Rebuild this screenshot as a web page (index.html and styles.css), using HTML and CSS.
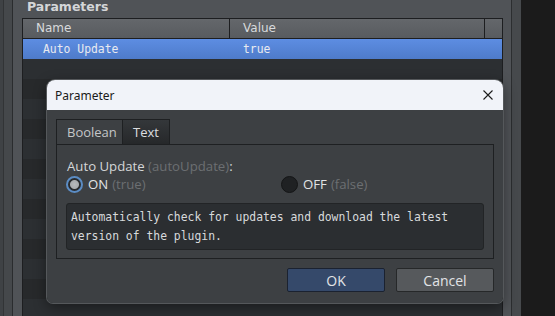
FILE: index.html
```html
<!DOCTYPE html>
<html lang="en">
<head>
    <meta charset="UTF-8">
    <meta name="viewport" content="width=device-width, initial-scale=1.0">
    <title>Parameters</title>
    <link rel="stylesheet" href="styles.css">
</head>
<body>
    <div class="app">
        <div class="side"></div>
        <div class="panel">
            <div class="panel-title">Parameters</div>
            <div class="table">
                <div class="row head">
                    <div class="cell name">Name</div>
                    <div class="cell value">Value</div>
                    <div class="cell stub"></div>
                </div>
                <div class="row selected">
                    <div class="cell name mono">Auto Update</div>
                    <div class="cell value mono">true</div>
                    <div class="cell"></div>
                </div>
                <div class="row"></div>
                <div class="row"></div>
                <div class="row"></div>
                <div class="row"></div>
                <div class="row"></div>
                <div class="row"></div>
                <div class="row"></div>
                <div class="row"></div>
                <div class="row"></div>
                <div class="row"></div>
                <div class="row"></div>
                <div class="row"></div>
                <div class="row"></div>
            </div>
        </div>
        <div class="gutter"></div>
        <div class="void"></div>
    </div>

    <!-- modal dialog over the list -->
    <div class="dialog">
        <div class="dialog-title">
            <span>Parameter</span>
            <svg class="close" width="10" height="10" viewBox="0 0 10 10">
                <path d="M0.5 0.5 L9.5 9.5 M9.5 0.5 L0.5 9.5" stroke="#1c1c1c" stroke-width="1.1" fill="none"/>
            </svg>
        </div>
        <div class="dialog-body">
            <div class="tabs">
                <div class="tab active">Boolean</div>
                <div class="tab">Text</div>
            </div>
            <div class="pane">
                <div class="field-label">Auto Update <span class="dim">(autoUpdate)</span>:</div>
                <div class="choices">
                    <label class="choice"><span class="radio on"></span>ON <span class="dim">(true)</span></label>
                    <label class="choice"><span class="radio"></span>OFF <span class="dim">(false)</span></label>
                </div>
                <div class="desc">Automatically check for updates and download the latest<br>version of the plugin.</div>
            </div>
            <div class="buttons">
                <button class="btn primary">OK</button>
                <button class="btn">Cancel</button>
            </div>
        </div>
    </div>
</body>
</html>
```

FILE: styles.css
```css
body {
    margin: 0;
    width: 555px;
    height: 316px;
    overflow: hidden;
    background-color: #1b1b1b;
    font-family: "DejaVu Sans", sans-serif;
    color: #d6d8da;
    position: relative;
}
.app {
    display: flex;
    height: 316px;
}
.side {
    width: 12px;
    background-color: #3f4245;
    border-right: 1px solid #2a2c2e;
    box-shadow: inset -8px 0 0 #45484b, inset -9px 0 0 #323436;
}
.panel {
    width: 481px;
    padding: 0 8px 0 9px;
    background-color: #505357;
    border-right: 1px solid #2c2e30;
}
.panel-title {
    height: 18px;
    line-height: 14px;
    padding-left: 5px;
    font-size: 12.5px;
    font-weight: bold;
    color: #d4d6d8;
}
.table {
    border: 1px solid #1d1e20;
    border-bottom: none;
    height: 297px;
    overflow: hidden;
    background-color: #27292b;
}
.row {
    display: grid;
    grid-template-columns: 207px 255px 17px;
    height: 20px;
    background-color: #27292b;
}
.row:nth-child(odd) {
    background-color: #2c2f32;
}
.row.head {
    height: 19px;
    border-bottom: 1px solid #1d1e20;
    background: linear-gradient(#64676b, #585b5f);
}
.head .cell {
    border-right: 1px solid #1d1e20;
    font-size: 12px;
    line-height: 19px;
    padding-left: 13px;
    color: #d8dadc;
}
.head .stub {
    border-right: none;
}
.row.selected {
    background: linear-gradient(#5d8de2, #4e7bca);
}
.selected .cell {
    line-height: 20px;
    color: #e8eaf0;
    padding-left: 13px;
}
.selected .name {
    padding-left: 20px;
}
.mono {
    font-family: "DejaVu Sans Mono", monospace;
    font-size: 11.4px;
}
.gutter {
    width: 9px;
    background-color: #46494c;
}
.void {
    flex: 1;
    background-color: #1b1b1b;
}

.dialog {
    position: absolute;
    left: 47px;
    top: 80px;
    width: 456px;
    height: 223px;
    border-radius: 8px 8px 6px 6px;
    overflow: hidden;
    box-shadow: 0 0 0 1px #55585b, 0 4px 14px rgba(0, 0, 0, 0.45);
    display: flex;
    flex-direction: column;
}
.dialog-title {
    flex-shrink: 0;
    height: 30px;
    background-color: #f1f3f9;
    display: flex;
    align-items: center;
    justify-content: space-between;
    padding: 0 10px 0 8px;
    font-family: "Noto Sans", sans-serif;
    font-size: 12px;
    color: #1a1a1a;
}
.dialog-body {
    flex: 1;
    background-color: #3d4043;
    padding: 9px 9px 10px;
    display: flex;
    flex-direction: column;
    font-family: "Open Sans", sans-serif;
}
.tabs {
    display: flex;
    height: 25px;
}
.tab {
    border: 1px solid #1e2022;
    border-bottom: none;
    font-size: 13px;
    line-height: 24px;
    padding: 0 10px;
    color: #dcdee0;
    background: linear-gradient(#34373a, #26282a);
}
.tab + .tab {
    border-left: none;
}
.tab.active {
    background-color: #3d4043;
    background-image: none;
    color: #c4c6c8;
    width: 45px;
    margin-bottom: -1px;
    height: 25px;
}
.pane {
    border: 1px solid #1e2022;
    height: 100px;
    padding: 13px 9px 0 9px;
    font-size: 13.2px;
}
.field-label {
    line-height: 16px;
    padding-left: 1px;
    color: #d4d6d8;
}
.dim {
    color: #6c6f72;
}
.choices {
    display: grid;
    grid-template-columns: 215px 1fr;
    height: 20px;
    align-items: center;
}
.choice {
    display: flex;
    align-items: center;
    gap: 5px;
    color: #e2e4e6;
}
.choice .dim {
    margin-left: -1px;
}
.radio {
    width: 15px;
    height: 15px;
    border-radius: 50%;
    background-color: #1f2123;
    border: 1px solid #141516;
}
.radio.on {
    border: 2px solid #5b8cc4;
    width: 13px;
    height: 13px;
    background: radial-gradient(circle, #b7b9bb 0, #a9abad 4px, #2a2c2e 5px);
}
.desc {
    margin-top: 9px;
    height: 38px;
    padding: 4px 4px 3px;
    border: 1px solid #222426;
    border-radius: 3px;
    background-color: #2b2e31;
    font-family: "DejaVu Sans Mono", monospace;
    font-size: 11.4px;
    line-height: 19px;
    color: #d8dadc;
}
.buttons {
    display: flex;
    justify-content: flex-end;
    gap: 11px;
    margin-top: 9px;
}
.btn {
    width: 98px;
    height: 24px;
    border: 1px solid #262829;
    border-radius: 2px;
    background-color: #56595c;
    color: #e2e4e6;
    font-family: "Open Sans", sans-serif;
    font-size: 14px;
    padding: 0;
}
.btn.primary {
    background-color: #35496a;
    border-color: #1b2230;
}
```
